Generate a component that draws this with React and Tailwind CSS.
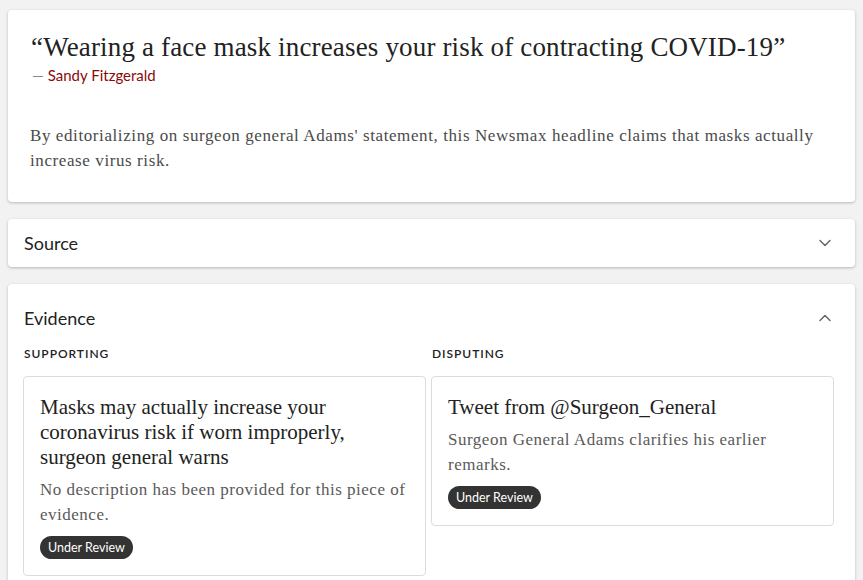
import { ChevronDown, ChevronUp } from "lucide-react";

const serif = "font-['Liberation_Serif','Times_New_Roman',serif]";
const sans = "font-['Lato','Open_Sans',sans-serif]";

function EvidenceCard({ title, description }) {
  return (
    <div className="-ml-px rounded border border-[#dcdcdc] bg-white px-4 pt-[18px] pb-4">
      <h3 className={`${serif} text-[21px] leading-[25px] text-[#222]`}>{title}</h3>
      <p className={`${serif} mt-[7px] text-[17px] leading-[25px] tracking-[0.03em] text-[#5a5a5a]`}>{description}</p>
      <span className={`${sans} mt-[9px] inline-block rounded-full bg-[#333] px-2 py-[3px] text-[12.5px] leading-[17px] text-white`}>
        Under Review
      </span>
    </div>
  );
}

export default function App() {
  return (
    <div className="min-h-screen bg-[#f2f2f2] px-2 pt-[10px]">
      <div className="rounded bg-white px-6 pt-[21px] pb-[29px] shadow-[0_1px_3px_rgba(0,0,0,0.25)]">
        <h1 className={`${serif} -ml-[1px] text-[27px] leading-[32px] tracking-[0.006em] text-[#222]`}>
          “Wearing a face mask increases your risk of contracting COVID-19”
        </h1>
        <p className={`${sans} mt-[2px] text-[15px] leading-[20px]`}>
          <span className="text-[#888]">—</span> <span className="text-[#8b0a0a]">Sandy Fitzgerald</span>
        </p>
        <p className={`${serif} mt-[38px] -ml-[2px] text-[17px] leading-[25px] tracking-[0.035em] text-[#4a4a4a]`}>
          By editorializing on surgeon general Adams' statement, this Newsmax headline claims that masks actually increase virus risk.
        </p>
      </div>

      <div className="mt-[17px] flex h-[48px] items-center justify-between rounded bg-white pl-4 pr-5 shadow-[0_1px_3px_rgba(0,0,0,0.25)]">
        <span className={`${sans} text-[18px] text-[#222]`}>Source</span>
        <ChevronDown className="h-5 w-5 text-[#666]" strokeWidth={1.75} />
      </div>

      <div className="mt-[17px] rounded bg-white pl-4 pr-[21px] pt-[22px] pb-4 shadow-[0_1px_3px_rgba(0,0,0,0.25)]">
        <div className="flex items-center justify-between">
          <span className={`${sans} text-[18px] leading-[24px] text-[#222]`}>Evidence</span>
          <ChevronUp className="-mr-px h-5 w-5 text-[#666]" strokeWidth={1.75} />
        </div>
        <div className="mt-[16px] grid grid-cols-2 items-start gap-x-[6px]">
          <div>
            <div className={`${sans} mb-[14px] text-[12px] font-semibold leading-[16px] tracking-[0.08em] text-[#222]`}>SUPPORTING</div>
            <EvidenceCard
              title="Masks may actually increase your coronavirus risk if worn improperly, surgeon general warns"
              description="No description has been provided for this piece of evidence."
            />
          </div>
          <div>
            <div className={`${sans} mb-[14px] text-[12px] font-semibold leading-[16px] tracking-[0.08em] text-[#222]`}>DISPUTING</div>
            <EvidenceCard
              title="Tweet from @Surgeon_General"
              description="Surgeon General Adams clarifies his earlier remarks."
            />
          </div>
        </div>
      </div>
    </div>
  );
}
